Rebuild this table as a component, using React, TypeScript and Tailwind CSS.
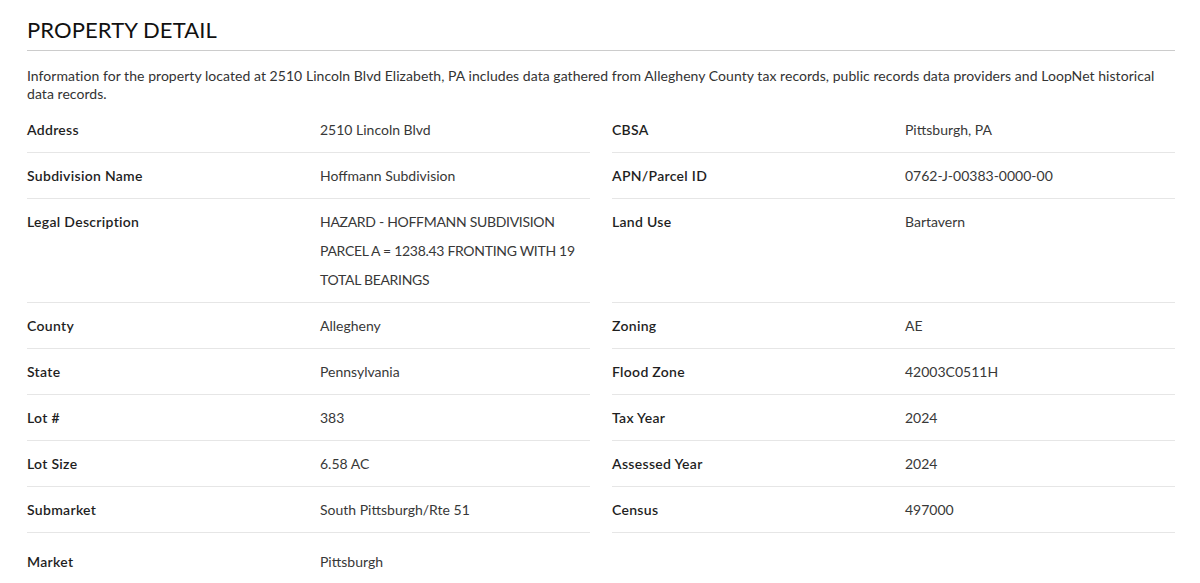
import React from "react";

type Row = { label: string; value: string[] };

const left: Row[] = [
  { label: "Address", value: ["2510 Lincoln Blvd"] },
  { label: "Subdivision Name", value: ["Hoffmann Subdivision"] },
  {
    label: "Legal Description",
    value: ["HAZARD - HOFFMANN SUBDIVISION", "PARCEL A = 1238.43 FRONTING WITH 19", "TOTAL BEARINGS"],
  },
  { label: "County", value: ["Allegheny"] },
  { label: "State", value: ["Pennsylvania"] },
  { label: "Lot #", value: ["383"] },
  { label: "Lot Size", value: ["6.58 AC"] },
  { label: "Submarket", value: ["South Pittsburgh/Rte 51"] },
  { label: "Market", value: ["Pittsburgh"] },
];

const right: Row[] = [
  { label: "CBSA", value: ["Pittsburgh, PA"] },
  { label: "APN/Parcel ID", value: ["0762-J-00383-0000-00"] },
  { label: "Land Use", value: ["Bartavern"] },
  { label: "Zoning", value: ["AE"] },
  { label: "Flood Zone", value: ["42003C0511H"] },
  { label: "Tax Year", value: ["2024"] },
  { label: "Assessed Year", value: ["2024"] },
  { label: "Census", value: ["497000"] },
];

function Cell({ row, last }: { row?: Row; last?: boolean }) {
  if (!row) return <div />;
  return (
    <div className={"flex " + (last ? "pt-[14px]" : "pt-[8px] pb-[8px] border-b border-[#e6e6e6]")}>
      <div className="w-[293px] shrink-0 font-semibold text-[14px] tracking-[0.3px] leading-[29px] text-[#1f1f1f]">
        {row.label}
      </div>
      <div className="flex-1 text-[14px] leading-[29px] text-[#383838]">
        {row.value.map((v, i) => (
          <div key={i} className={v === v.toUpperCase() && /[A-Z]{3}/.test(v) ? "tracking-[-0.3px]" : ""}>
            {v}
          </div>
        ))}
      </div>
    </div>
  );
}

export default function App() {
  const rows = left.map((l, i) => ({ l, r: right[i] }));
  return (
    <div
      className="bg-white w-[1200px] h-[583px] overflow-hidden pl-[27px] pr-[25px] pt-[14px]"
      style={{ fontFamily: "Lato, 'Open Sans', sans-serif" }}
    >
      <h2 className="text-[22px] leading-[32px] text-[#111] pb-[4px] border-b border-[#cccccc] tracking-[0.1px]">
        PROPERTY DETAIL
      </h2>
      <p className="text-[14px] leading-[18px] text-[#333] tracking-[0.05px] mt-[16px] mb-[4px]">
        Information for the property located at 2510 Lincoln Blvd Elizabeth, PA includes data gathered from Allegheny
        County tax records, public records data providers and LoopNet historical data records.
      </p>
      <div className="grid grid-cols-[563px_563px] gap-x-[22px]">
        {rows.map(({ l, r }, i) => (
          <React.Fragment key={i}>
            <Cell row={l} last={i === rows.length - 1} />
            <Cell row={r} last={i === rows.length - 1} />
          </React.Fragment>
        ))}
      </div>
    </div>
  );
}
